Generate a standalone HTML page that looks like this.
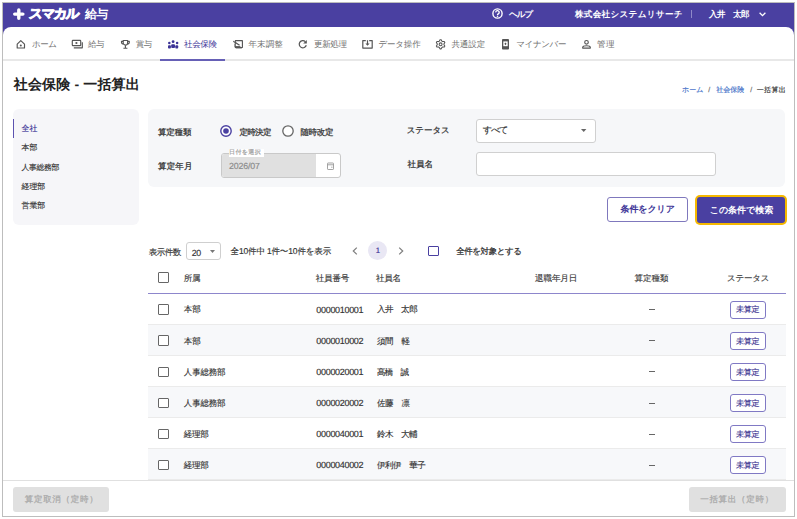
<!DOCTYPE html>
<html><head><meta charset="utf-8">
<style>
*{box-sizing:border-box;margin:0;padding:0}
html,body{width:797px;height:519px;overflow:hidden;background:#fff}
body{font-family:"Liberation Sans",sans-serif;color:#333;position:relative;text-rendering:geometricPrecision}
.a{position:absolute}
.t{position:absolute;white-space:nowrap}
svg{position:absolute;overflow:visible}
</style></head><body>
<div class="a" style="left:2px;top:2px;width:793.00px;height:515.00px;border:1px solid #bdbdbd;background:#fff"></div>
<div class="a" style="left:3px;top:3px;width:791.00px;height:37.00px;background:#4a40a1"></div>
<div class="a" style="left:3px;top:26.5px;width:791.00px;height:489.50px;background:#fff;border-radius:8px 8px 0 0"></div>
<svg style="left:12.5px;top:7.5px" width="10" height="12" viewBox="0 0 10 12"><path d="M5.8 2v8.2M1.7 6.1h8.2" stroke="#fff" stroke-width="3.4" stroke-linecap="round"/></svg>
<div class="t" style="left:28.88px;top:6.00px;font-size:13.5px;line-height:16px;height:16px;color:#fff;font-weight:bold;letter-spacing:-1.567px;-webkit-text-stroke:0.9px #fff;transform:skewX(-5deg)">スマカル</div>
<div class="t" style="left:85.06px;top:6.00px;font-size:12px;line-height:16px;height:16px;color:#fff;font-weight:bold;letter-spacing:-0.800px;">給与</div>
<svg style="left:492.3px;top:8.2px" width="11" height="11" viewBox="0 0 11 11"><circle cx="5.5" cy="5.5" r="4.6" fill="none" stroke="#fff" stroke-width="1.4"/><path d="M3.8 4.4a1.7 1.7 0 1 1 2.5 1.4c-.55.3-.8.55-.8 1.2" fill="none" stroke="#fff" stroke-width="1.4"/><circle cx="5.5" cy="8.2" r=".8" fill="#fff"/></svg>
<div class="t" style="left:509.00px;top:7.00px;font-size:8.5px;line-height:14px;height:14px;color:#fff;font-weight:bold;letter-spacing:-1.000px;">ヘルプ</div>
<div class="t" style="left:575.00px;top:7.00px;font-size:8.6px;line-height:14px;height:14px;color:#fff;font-weight:bold;letter-spacing:0.273px;">株式会社システムリサーチ</div>
<div class="a" style="left:691px;top:10px;width:1.00px;height:8.00px;background:#8f89c8"></div>
<div class="t" style="left:708.90px;top:7.00px;font-size:8.5px;line-height:14px;height:14px;color:#fff;font-weight:bold;letter-spacing:-0.475px;">入井　太郎</div>
<svg style="left:758.5px;top:11.5px" width="7" height="5" viewBox="0 0 7 5"><path d="M.6 .8l2.9 2.9 2.9-2.9" fill="none" stroke="#fff" stroke-width="1.3"/></svg>
<div class="a" style="left:3px;top:59px;width:791.00px;height:2.00px;background:#e8e8e8"></div>
<div class="a" style="left:160px;top:59px;width:65.00px;height:2.00px;background:#6660b6"></div>
<div class="t" style="left:32.00px;top:37.00px;font-size:8.5px;line-height:14px;height:14px;color:#707070;font-weight:normal;letter-spacing:-0.500px;">ホーム</div>
<div class="t" style="left:88.00px;top:37.00px;font-size:8.5px;line-height:14px;height:14px;color:#707070;font-weight:normal;letter-spacing:-0.600px;">給与</div>
<div class="t" style="left:135.64px;top:37.00px;font-size:8.5px;line-height:14px;height:14px;color:#707070;font-weight:normal;letter-spacing:-0.400px;">賞与</div>
<div class="t" style="left:184.00px;top:37.00px;font-size:8.5px;line-height:14px;height:14px;color:#3b3296;font-weight:normal;letter-spacing:-0.333px;">社会保険</div>
<div class="t" style="left:248.46px;top:37.00px;font-size:8.5px;line-height:14px;height:14px;color:#707070;font-weight:normal;letter-spacing:0.100px;">年末調整</div>
<div class="t" style="left:314.00px;top:37.00px;font-size:8.5px;line-height:14px;height:14px;color:#707070;font-weight:normal;letter-spacing:-0.333px;">更新処理</div>
<div class="t" style="left:378.46px;top:37.00px;font-size:8.5px;line-height:14px;height:14px;color:#707070;font-weight:normal;letter-spacing:-0.175px;">データ操作</div>
<div class="t" style="left:451.46px;top:37.00px;font-size:8.5px;line-height:14px;height:14px;color:#707070;font-weight:normal;letter-spacing:-0.100px;">共通設定</div>
<div class="t" style="left:516.28px;top:37.00px;font-size:8.5px;line-height:14px;height:14px;color:#707070;font-weight:normal;letter-spacing:-0.360px;">マイナンバー</div>
<div class="t" style="left:597.10px;top:37.00px;font-size:8.5px;line-height:14px;height:14px;color:#707070;font-weight:normal;letter-spacing:0.500px;">管理</div>
<svg style="left:0px;top:0px" width="797" height="519" viewBox="0 0 797 519">
<g fill="none" stroke="#555" stroke-width="1.15" stroke-linejoin="round">
<path d="M17.2 44.2 L20.8 40.7 L24.5 44.2 V48 H17.2 Z"/>
<rect x="72.3" y="40.4" width="8.4" height="5.2" rx=".6"/>
<path d="M73.8 47.8 H82.3 V42.2"/>
<path d="M123.2 40.5 H127.6 V42.9 A2.2 2.2 0 0 1 123.2 42.9 Z"/>
<path d="M123.2 41.3 H121.5 V42.2 A1.8 1.8 0 0 0 123.3 44 M127.6 41.3 H129.3 V42.2 A1.8 1.8 0 0 1 127.5 44 M125.4 45.2 V48 M123.4 48.2 H127.4"/>
<rect x="235.2" y="40.6" width="7.2" height="7" rx=".8" stroke-width="1.1"/>
<path d="M305.3 41.6 A3.6 3.6 0 1 0 306.3 45.3" stroke-width="1.25"/>
<path d="M365.8 40.6 H362.8 V48.1 H372.2 V40.6 H369.2 M367.5 40.2 V44.6" stroke-width="1.2"/>
<path d="M440.00,39.74 L441.20,39.74 L441.90,41.16 L442.67,41.60 L444.25,41.50 L444.85,42.54 L443.97,43.86 L443.97,44.74 L444.85,46.06 L444.25,47.10 L442.67,47.00 L441.90,47.44 L441.20,48.86 L440.00,48.86 L439.30,47.44 L438.53,47.00 L436.95,47.10 L436.35,46.06 L437.23,44.74 L437.23,43.86 L436.35,42.54 L436.95,41.50 L438.53,41.60 L439.30,41.16Z" stroke-width="1.05"/>
<circle cx="440.6" cy="44.3" r="1.45" stroke-width="1.05"/>
<circle cx="586.5" cy="42.3" r="1.8" stroke-width="1.15"/>
<path d="M582.7 48.1 V47.2 C582.7 45.3 590.3 45.3 590.3 47.2 V48.1 Z" stroke-width="1.15"/>
</g>
<g fill="#555">
<circle cx="20.8" cy="45.5" r="1"/>
<circle cx="76.4" cy="43" r="1.1"/>
<path d="M306.8 40 V43.6 H303.2 Z"/>
<path d="M365.4 43.4 L367.5 45.7 L369.6 43.4 Z"/>
<rect x="502" y="39" width="7" height="10.5" rx=".9"/>
</g>
<rect x="503.3" y="41.4" width="4.4" height="4.8" fill="#fff"/>
<path d="M505.5 42.4 L506.6 43.8 L505.5 45.2 L504.4 43.8Z" fill="#555"/>
<rect x="235.2" y="40.6" width="7.2" height="7" rx=".8" fill="#fff" stroke="#555" stroke-width="1.1"/>
<path d="M233.3 41.3 L239.6 45.2" stroke="#555" stroke-width="1.3"/>
<rect x="235.1" y="46.1" width="5.3" height="1.8" fill="#555"/>
<rect x="233" y="40.5" width="2" height="3" fill="#fff"/>
<path d="M233.3 41.3 L236 43" stroke="#555" stroke-width="1.3"/>
<g fill="#3b3296">
<circle cx="173.1" cy="41.7" r="1.4"/><circle cx="169.3" cy="43.1" r="1.25"/><circle cx="177.1" cy="43.1" r="1.25"/>
<rect x="171.2" y="44.2" width="3.8" height="3.7" rx="1"/>
<rect x="168" y="45.3" width="2.9" height="3.1" rx=".9"/>
<rect x="175.3" y="45.3" width="2.9" height="3.1" rx=".9"/>
</g>
</svg>
<div class="t" style="left:13.80px;top:75.00px;font-size:14px;line-height:18px;height:18px;color:#222;font-weight:bold;letter-spacing:0.150px;">社会保険 - 一括算出</div>
<div class="t" style="left:681.92px;top:86.00px;font-size:7px;line-height:10px;height:10px;color:#3f6fc8;font-weight:normal;-webkit-text-stroke:0.15px #3f6fc8;letter-spacing:0.150px;">ホーム</div>
<div class="t" style="left:708.36px;top:86.00px;font-size:7px;line-height:10px;height:10px;color:#666;font-weight:normal;-webkit-text-stroke:0.15px #666;">/</div>
<div class="t" style="left:716.36px;top:86.00px;font-size:7px;line-height:10px;height:10px;color:#3f6fc8;font-weight:normal;-webkit-text-stroke:0.15px #3f6fc8;letter-spacing:-0.067px;">社会保険</div>
<div class="t" style="left:750.26px;top:86.00px;font-size:7px;line-height:10px;height:10px;color:#666;font-weight:normal;-webkit-text-stroke:0.15px #666;">/</div>
<div class="t" style="left:756.64px;top:86.00px;font-size:7px;line-height:10px;height:10px;color:#333;font-weight:normal;-webkit-text-stroke:0.15px #333;letter-spacing:0.400px;">一括算出</div>
<div class="a" style="left:12.5px;top:109.3px;width:126.10px;height:115.30px;background:#f6f6f9;border-radius:6px"></div>
<div class="a" style="left:12.5px;top:118.8px;width:1.80px;height:19.20px;background:#5c52b0"></div>
<div class="t" style="left:21.54px;top:122.00px;font-size:7.9px;line-height:14px;height:14px;color:#3b3296;font-weight:normal;-webkit-text-stroke:0.15px #3b3296;">全社</div>
<div class="t" style="left:21.54px;top:141.00px;font-size:7.9px;line-height:14px;height:14px;color:#333;font-weight:normal;-webkit-text-stroke:0.15px #333;">本部</div>
<div class="t" style="left:21.54px;top:161.00px;font-size:7.9px;line-height:14px;height:14px;color:#333;font-weight:normal;-webkit-text-stroke:0.15px #333;letter-spacing:-0.425px;">人事総務部</div>
<div class="t" style="left:21.54px;top:180.00px;font-size:7.9px;line-height:14px;height:14px;color:#333;font-weight:normal;-webkit-text-stroke:0.15px #333;">経理部</div>
<div class="t" style="left:21.54px;top:199.00px;font-size:7.9px;line-height:14px;height:14px;color:#333;font-weight:normal;-webkit-text-stroke:0.15px #333;">営業部</div>
<div class="a" style="left:148px;top:109px;width:637.00px;height:77.50px;background:#f6f7f9;border-radius:6px"></div>
<div class="t" style="left:158.00px;top:125.00px;font-size:8.5px;line-height:14px;height:14px;color:#333;font-weight:normal;-webkit-text-stroke:0.25px #333;letter-spacing:-0.200px;">算定種類</div>
<div class="t" style="left:158.00px;top:159.00px;font-size:8.5px;line-height:14px;height:14px;color:#333;font-weight:normal;-webkit-text-stroke:0.25px #333;letter-spacing:0.133px;">算定年月</div>
<div class="t" style="left:406.74px;top:123.00px;font-size:8.5px;line-height:14px;height:14px;color:#333;font-weight:normal;-webkit-text-stroke:0.25px #333;letter-spacing:-0.075px;">ステータス</div>
<div class="t" style="left:407.54px;top:157.00px;font-size:8.5px;line-height:14px;height:14px;color:#333;font-weight:normal;-webkit-text-stroke:0.25px #333;">社員名</div>
<svg style="left:220px;top:125.3px" width="12" height="12" viewBox="0 0 12 12"><circle cx="6" cy="6" r="5.2" fill="#fff" stroke="#4a40a1" stroke-width="1.4"/><circle cx="6" cy="6" r="2.8" fill="#4a40a1"/></svg>
<div class="t" style="left:239.44px;top:125.00px;font-size:8.5px;line-height:14px;height:14px;color:#333;font-weight:normal;-webkit-text-stroke:0.25px #333;letter-spacing:-0.667px;">定時決定</div>
<svg style="left:281.7px;top:125.3px" width="12" height="12" viewBox="0 0 12 12"><circle cx="6" cy="6" r="5.2" fill="#fff" stroke="#666" stroke-width="1.3"/></svg>
<div class="t" style="left:300.46px;top:125.00px;font-size:8.5px;line-height:14px;height:14px;color:#333;font-weight:normal;-webkit-text-stroke:0.25px #333;letter-spacing:-0.333px;">随時改定</div>
<div class="a" style="left:220.5px;top:153px;width:120.50px;height:24.50px;background:#fff;border:1px solid #c9c9c9;border-radius:3px"></div>
<div class="a" style="left:221.5px;top:154px;width:94.50px;height:22.50px;background:#e0e0e0;border-radius:2px 0 0 2px"></div>
<div class="a" style="left:229px;top:148.6px;width:35.00px;height:8.10px;background:#fff"></div>
<div class="t" style="left:229.10px;top:149.00px;font-size:6.0px;line-height:8px;height:8px;color:#999;font-weight:normal;-webkit-text-stroke:0.15px #999;letter-spacing:0.375px;">日付を選択</div>
<div class="t" style="left:229.00px;top:160.00px;font-size:8.8px;line-height:12px;height:12px;color:#8a8a8a;font-weight:normal;-webkit-text-stroke:0.15px #8a8a8a;letter-spacing:-0.167px;">2026/07</div>
<svg style="left:326.7px;top:162px" width="7" height="8" viewBox="0 0 7 8"><rect x=".5" y="1" width="6" height="6.5" rx=".6" fill="none" stroke="#999" stroke-width=".9"/><path d="M.5 2.8h6M4.2 5.2h1.3" stroke="#999" stroke-width=".9"/></svg>
<div class="a" style="left:475.5px;top:119px;width:120.00px;height:23.70px;background:#fff;border:1px solid #d0d0d0;border-radius:3px"></div>
<div class="t" style="left:482.72px;top:123.00px;font-size:9.2px;line-height:14px;height:14px;color:#333;font-weight:normal;-webkit-text-stroke:0.15px #333;letter-spacing:-1.200px;">すべて</div>
<svg style="left:580.8px;top:129.3px" width="6" height="4" viewBox="0 0 6 4"><path d="M0 0h5.4L2.7 3z" fill="#666"/></svg>
<div class="a" style="left:475.5px;top:152.2px;width:240.50px;height:24.20px;background:#fff;border:1px solid #d0d0d0;border-radius:3px"></div>
<div class="a" style="left:607.2px;top:196.7px;width:80.60px;height:25.10px;background:#fff;border:1px solid #7f78bd;border-radius:3px"></div>
<div class="t" style="left:620.54px;top:202.00px;font-size:9.0px;line-height:14px;height:14px;color:#3b3296;font-weight:bold;letter-spacing:-0.100px;">条件をクリア</div>
<div class="a" style="left:695px;top:195px;width:92.00px;height:30.00px;background:#f5b800;border-radius:5px"></div>
<div class="a" style="left:697px;top:197px;width:88.00px;height:26.00px;background:#4a40a1;border-radius:3px"></div>
<div class="t" style="left:709.74px;top:203.00px;font-size:9.0px;line-height:14px;height:14px;color:#fff;font-weight:bold;letter-spacing:-0.017px;">この条件で検索</div>
<div class="t" style="left:148.64px;top:245.00px;font-size:8.5px;line-height:14px;height:14px;color:#333;font-weight:normal;-webkit-text-stroke:0.15px #333;letter-spacing:-0.467px;">表示件数</div>
<div class="a" style="left:186px;top:242px;width:35.00px;height:17.50px;background:#fff;border:1px solid #cfcfcf;border-radius:3px"></div>
<div class="t" style="left:191.72px;top:246.00px;font-size:8.8px;line-height:14px;height:14px;color:#333;font-weight:normal;-webkit-text-stroke:0.15px #333;letter-spacing:-0.400px;">20</div>
<svg style="left:210.3px;top:250.3px" width="5" height="3" viewBox="0 0 5 3"><path d="M0 0h5L2.5 3z" fill="#777"/></svg>
<div class="t" style="left:230.54px;top:244.00px;font-size:8.5px;line-height:14px;height:14px;color:#333;font-weight:normal;-webkit-text-stroke:0.15px #333;letter-spacing:-0.150px;">全10件中 1件〜10件を表示</div>
<svg style="left:352.4px;top:247px" width="6" height="8" viewBox="0 0 6 8"><path d="M4.8 .6L1.3 4 4.8 7.4" fill="none" stroke="#808080" stroke-width="1.25"/></svg>
<div class="a" style="left:368.3px;top:241px;width:19.00px;height:19.00px;background:#e9e7f4;border-radius:50%"></div>
<div class="t" style="left:375.64px;top:246.00px;font-size:7.8px;line-height:10px;height:10px;color:#3b3296;font-weight:normal;-webkit-text-stroke:0.15px #3b3296;">1</div>
<svg style="left:398px;top:247px" width="6" height="8" viewBox="0 0 6 8"><path d="M1.2 .6L4.7 4 1.2 7.4" fill="none" stroke="#808080" stroke-width="1.25"/></svg>
<div class="a" style="left:428px;top:245.5px;width:10.80px;height:10.80px;border:1.6px solid #4a40a1;border-radius:1px;background:#fff"></div>
<div class="t" style="left:456.26px;top:244.00px;font-size:8.5px;line-height:14px;height:14px;color:#333;font-weight:normal;-webkit-text-stroke:0.25px #333;letter-spacing:-0.443px;">全件を対象とする</div>
<div class="a" style="left:158px;top:272.1px;width:10.60px;height:10.60px;border:1.6px solid #666;border-radius:1px;background:#fff"></div>
<div class="t" style="left:183.82px;top:271.00px;font-size:8.5px;line-height:14px;height:14px;color:#3a3a3a;font-weight:normal;-webkit-text-stroke:0.15px #3a3a3a;letter-spacing:-0.400px;">所属</div>
<div class="t" style="left:315.64px;top:271.00px;font-size:8.5px;line-height:14px;height:14px;color:#3a3a3a;font-weight:normal;-webkit-text-stroke:0.15px #3a3a3a;letter-spacing:-0.133px;">社員番号</div>
<div class="t" style="left:376.00px;top:271.00px;font-size:8.5px;line-height:14px;height:14px;color:#3a3a3a;font-weight:normal;-webkit-text-stroke:0.15px #3a3a3a;letter-spacing:-0.200px;">社員名</div>
<div class="t" style="left:535.08px;top:271.00px;font-size:8.5px;line-height:14px;height:14px;color:#3a3a3a;font-weight:normal;-webkit-text-stroke:0.15px #3a3a3a;letter-spacing:-0.075px;">退職年月日</div>
<div class="t" style="left:634.46px;top:271.00px;font-size:8.5px;line-height:14px;height:14px;color:#3a3a3a;font-weight:normal;-webkit-text-stroke:0.15px #3a3a3a;letter-spacing:0.033px;">算定種類</div>
<div class="t" style="left:727.10px;top:271.00px;font-size:8.5px;line-height:14px;height:14px;color:#3a3a3a;font-weight:normal;-webkit-text-stroke:0.15px #3a3a3a;letter-spacing:-0.250px;">ステータス</div>
<div class="a" style="left:148px;top:292.6px;width:638.00px;height:1.20px;background:#8d86cc"></div>
<div class="a" style="left:148px;top:293.8px;width:638.00px;height:31.10px;background:#fff;border-bottom:1px solid #ebebeb"></div>
<div class="a" style="left:158px;top:304.35px;width:10.60px;height:10.60px;border:1.6px solid #666;border-radius:1px;background:#fff"></div>
<div class="t" style="left:183.82px;top:302.00px;font-size:8.5px;line-height:14px;height:14px;color:#333;font-weight:normal;-webkit-text-stroke:0.15px #333;">本部</div>
<div class="t" style="left:316.36px;top:303.00px;font-size:9.0px;line-height:14px;height:14px;color:#333;font-weight:normal;-webkit-text-stroke:0.15px #333;letter-spacing:-0.322px;">0000010001</div>
<div class="t" style="left:376.90px;top:302.00px;font-size:8.5px;line-height:14px;height:14px;color:#333;font-weight:normal;-webkit-text-stroke:0.15px #333;letter-spacing:-0.425px;">入井　太郎</div>
<div class="a" style="left:648.6px;top:309.25000000000006px;width:6.40px;height:0.90px;background:#666"></div>
<div class="a" style="left:730.3px;top:300.95000000000005px;width:36.20px;height:18.00px;background:#fff;border:1px solid #8079c4;border-radius:3px"></div>
<div class="t" style="left:736.00px;top:303.00px;font-size:8.1px;line-height:14px;height:14px;color:#3b3391;font-weight:normal;-webkit-text-stroke:0.15px #3b3391;letter-spacing:-0.400px;">未算定</div>
<div class="a" style="left:148px;top:324.90000000000003px;width:638.00px;height:31.10px;background:#f7f8fa;border-bottom:1px solid #ebebeb"></div>
<div class="a" style="left:158px;top:335.45000000000005px;width:10.60px;height:10.60px;border:1.6px solid #666;border-radius:1px;background:#fff"></div>
<div class="t" style="left:183.82px;top:334.00px;font-size:8.5px;line-height:14px;height:14px;color:#333;font-weight:normal;-webkit-text-stroke:0.15px #333;">本部</div>
<div class="t" style="left:316.36px;top:334.00px;font-size:9.0px;line-height:14px;height:14px;color:#333;font-weight:normal;-webkit-text-stroke:0.15px #333;letter-spacing:-0.322px;">0000010002</div>
<div class="t" style="left:376.90px;top:334.00px;font-size:8.5px;line-height:14px;height:14px;color:#333;font-weight:normal;-webkit-text-stroke:0.15px #333;letter-spacing:-0.333px;">須間　軽</div>
<div class="a" style="left:648.6px;top:340.3500000000001px;width:6.40px;height:0.90px;background:#666"></div>
<div class="a" style="left:730.3px;top:332.05000000000007px;width:36.20px;height:18.00px;background:#fff;border:1px solid #8079c4;border-radius:3px"></div>
<div class="t" style="left:736.00px;top:335.00px;font-size:8.1px;line-height:14px;height:14px;color:#3b3391;font-weight:normal;-webkit-text-stroke:0.15px #3b3391;letter-spacing:-0.400px;">未算定</div>
<div class="a" style="left:148px;top:356.0px;width:638.00px;height:31.10px;background:#fff;border-bottom:1px solid #ebebeb"></div>
<div class="a" style="left:158px;top:366.55px;width:10.60px;height:10.60px;border:1.6px solid #666;border-radius:1px;background:#fff"></div>
<div class="t" style="left:183.82px;top:365.00px;font-size:8.5px;line-height:14px;height:14px;color:#333;font-weight:normal;-webkit-text-stroke:0.15px #333;letter-spacing:-0.175px;">人事総務部</div>
<div class="t" style="left:316.36px;top:365.00px;font-size:9.0px;line-height:14px;height:14px;color:#333;font-weight:normal;-webkit-text-stroke:0.15px #333;letter-spacing:-0.322px;">0000020001</div>
<div class="t" style="left:376.90px;top:365.00px;font-size:8.5px;line-height:14px;height:14px;color:#333;font-weight:normal;-webkit-text-stroke:0.15px #333;letter-spacing:-0.667px;">髙橋　誠</div>
<div class="a" style="left:648.6px;top:371.45000000000005px;width:6.40px;height:0.90px;background:#666"></div>
<div class="a" style="left:730.3px;top:363.15000000000003px;width:36.20px;height:18.00px;background:#fff;border:1px solid #8079c4;border-radius:3px"></div>
<div class="t" style="left:736.00px;top:366.00px;font-size:8.1px;line-height:14px;height:14px;color:#3b3391;font-weight:normal;-webkit-text-stroke:0.15px #3b3391;letter-spacing:-0.400px;">未算定</div>
<div class="a" style="left:148px;top:387.1px;width:638.00px;height:31.10px;background:#f7f8fa;border-bottom:1px solid #ebebeb"></div>
<div class="a" style="left:158px;top:397.65000000000003px;width:10.60px;height:10.60px;border:1.6px solid #666;border-radius:1px;background:#fff"></div>
<div class="t" style="left:183.82px;top:396.00px;font-size:8.5px;line-height:14px;height:14px;color:#333;font-weight:normal;-webkit-text-stroke:0.15px #333;letter-spacing:-0.175px;">人事総務部</div>
<div class="t" style="left:316.36px;top:396.00px;font-size:9.0px;line-height:14px;height:14px;color:#333;font-weight:normal;-webkit-text-stroke:0.15px #333;letter-spacing:-0.322px;">0000020002</div>
<div class="t" style="left:376.90px;top:396.00px;font-size:8.5px;line-height:14px;height:14px;color:#333;font-weight:normal;-webkit-text-stroke:0.15px #333;letter-spacing:-0.333px;">佐藤　凛</div>
<div class="a" style="left:648.6px;top:402.55000000000007px;width:6.40px;height:0.90px;background:#666"></div>
<div class="a" style="left:730.3px;top:394.25000000000006px;width:36.20px;height:18.00px;background:#fff;border:1px solid #8079c4;border-radius:3px"></div>
<div class="t" style="left:736.00px;top:397.00px;font-size:8.1px;line-height:14px;height:14px;color:#3b3391;font-weight:normal;-webkit-text-stroke:0.15px #3b3391;letter-spacing:-0.400px;">未算定</div>
<div class="a" style="left:148px;top:418.20000000000005px;width:638.00px;height:31.10px;background:#fff;border-bottom:1px solid #ebebeb"></div>
<div class="a" style="left:158px;top:428.75000000000006px;width:10.60px;height:10.60px;border:1.6px solid #666;border-radius:1px;background:#fff"></div>
<div class="t" style="left:183.82px;top:427.00px;font-size:8.5px;line-height:14px;height:14px;color:#333;font-weight:normal;-webkit-text-stroke:0.15px #333;letter-spacing:-0.300px;">経理部</div>
<div class="t" style="left:316.36px;top:427.00px;font-size:9.0px;line-height:14px;height:14px;color:#333;font-weight:normal;-webkit-text-stroke:0.15px #333;letter-spacing:-0.322px;">0000040001</div>
<div class="t" style="left:376.90px;top:427.00px;font-size:8.5px;line-height:14px;height:14px;color:#333;font-weight:normal;-webkit-text-stroke:0.15px #333;letter-spacing:-0.450px;">鈴木　大輔</div>
<div class="a" style="left:648.6px;top:433.6500000000001px;width:6.40px;height:0.90px;background:#666"></div>
<div class="a" style="left:730.3px;top:425.3500000000001px;width:36.20px;height:18.00px;background:#fff;border:1px solid #8079c4;border-radius:3px"></div>
<div class="t" style="left:736.00px;top:428.00px;font-size:8.1px;line-height:14px;height:14px;color:#3b3391;font-weight:normal;-webkit-text-stroke:0.15px #3b3391;letter-spacing:-0.400px;">未算定</div>
<div class="a" style="left:148px;top:449.3px;width:638.00px;height:31.10px;background:#f7f8fa;border-bottom:1px solid #ebebeb"></div>
<div class="a" style="left:158px;top:459.85px;width:10.60px;height:10.60px;border:1.6px solid #666;border-radius:1px;background:#fff"></div>
<div class="t" style="left:183.82px;top:458.00px;font-size:8.5px;line-height:14px;height:14px;color:#333;font-weight:normal;-webkit-text-stroke:0.15px #333;letter-spacing:-0.300px;">経理部</div>
<div class="t" style="left:316.36px;top:458.00px;font-size:9.0px;line-height:14px;height:14px;color:#333;font-weight:normal;-webkit-text-stroke:0.15px #333;letter-spacing:-0.322px;">0000040002</div>
<div class="t" style="left:376.90px;top:458.00px;font-size:8.5px;line-height:14px;height:14px;color:#333;font-weight:normal;-webkit-text-stroke:0.15px #333;letter-spacing:-0.420px;">伊利伊　華子</div>
<div class="a" style="left:648.6px;top:464.75000000000006px;width:6.40px;height:0.90px;background:#666"></div>
<div class="a" style="left:730.3px;top:456.45000000000005px;width:36.20px;height:18.00px;background:#fff;border:1px solid #8079c4;border-radius:3px"></div>
<div class="t" style="left:736.00px;top:459.00px;font-size:8.1px;line-height:14px;height:14px;color:#3b3391;font-weight:normal;-webkit-text-stroke:0.15px #3b3391;letter-spacing:-0.400px;">未算定</div>
<div class="a" style="left:3px;top:480px;width:791.00px;height:1.00px;background:#e0e0e0"></div>
<div class="a" style="left:3px;top:481px;width:791.00px;height:35.00px;background:#fff"></div>
<div class="a" style="left:13px;top:487.3px;width:96.30px;height:24.70px;background:#e0e0e0;border-radius:3px"></div>
<div class="t" style="left:24.74px;top:492.00px;font-size:8.5px;line-height:14px;height:14px;color:#aaa;font-weight:normal;-webkit-text-stroke:0.25px #aaa;letter-spacing:0.700px;">算定取消（定時）</div>
<div class="a" style="left:688.8px;top:487.3px;width:96.80px;height:24.70px;background:#e0e0e0;border-radius:3px"></div>
<div class="t" style="left:700.20px;top:492.00px;font-size:8.5px;line-height:14px;height:14px;color:#aaa;font-weight:normal;-webkit-text-stroke:0.25px #aaa;letter-spacing:0.714px;">一括算出（定時）</div>
</body></html>
